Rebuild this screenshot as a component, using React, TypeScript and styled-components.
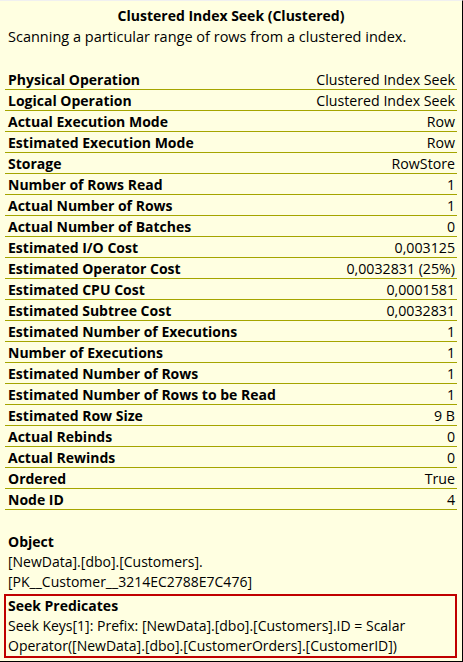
import styled, { createGlobalStyle } from "styled-components";

const GlobalStyle = createGlobalStyle`
  body {
    margin: 0;
    background: #ffffe1;
  }
`;

const Tooltip = styled.div`
  box-sizing: border-box;
  width: 463px;
  height: 662px;
  background: #ffffe1;
  border-top: 1px solid #f0f0f0;
  border-right: 1px solid #000;
  border-bottom: 1px solid #000;
  font-family: "Open Sans", "Noto Sans", sans-serif;
  font-size: 14px;
  color: #000;
  display: flex;
  flex-direction: column;
`;

const Title = styled.div`
  font-weight: 700;
  text-align: center;
  line-height: 21px;
  padding-top: 4px;
`;

const Description = styled.div`
  padding-left: 8px;
  line-height: 21px;
  font-size: 14.5px;
`;

const Table = styled.div`
  display: flex;
  flex-direction: column;
  margin: 22px 5px 0 5px;
`;

const Row = styled.div`
  display: flex;
  justify-content: space-between;
  align-items: center;
  height: 21px;
  box-sizing: border-box;
  border-bottom: 1px solid #a5a500;
  padding: 0 2px 0 3px;
`;

const Label = styled.span`
  font-weight: 700;
`;

const Value = styled.span`
  font-size: 14.2px;
`;

const Section = styled.div<{ $boxed?: boolean; $top?: number }>`
  margin: ${({ $top }) => $top ?? 0}px 5px 0 4px;
  padding: 0 4px 0 ${({ $boxed }) => ($boxed ? "2px" : "4px")};
  line-height: 20px;
  border: ${({ $boxed }) => ($boxed ? "2px solid #c00000" : "none")};
`;

const SectionTitle = styled.div`
  font-weight: 700;
`;

const rows: [string, string][] = [
  ["Physical Operation", "Clustered Index Seek"],
  ["Logical Operation", "Clustered Index Seek"],
  ["Actual Execution Mode", "Row"],
  ["Estimated Execution Mode", "Row"],
  ["Storage", "RowStore"],
  ["Number of Rows Read", "1"],
  ["Actual Number of Rows", "1"],
  ["Actual Number of Batches", "0"],
  ["Estimated I/O Cost", "0,003125"],
  ["Estimated Operator Cost", "0,0032831 (25%)"],
  ["Estimated CPU Cost", "0,0001581"],
  ["Estimated Subtree Cost", "0,0032831"],
  ["Estimated Number of Executions", "1"],
  ["Number of Executions", "1"],
  ["Estimated Number of Rows", "1"],
  ["Estimated Number of Rows to be Read", "1"],
  ["Estimated Row Size", "9 B"],
  ["Actual Rebinds", "0"],
  ["Actual Rewinds", "0"],
  ["Ordered", "True"],
  ["Node ID", "4"],
];

export default function App() {
  return (
    <>
      <GlobalStyle />
      <Tooltip>
        <Title>Clustered Index Seek (Clustered)</Title>
        <Description>
          Scanning a particular range of rows from a clustered index.
        </Description>
        <Table>
          {rows.map(([label, value]) => (
            <Row key={label}>
              <Label>{label}</Label>
              <Value>{value}</Value>
            </Row>
          ))}
        </Table>
        <Section $top={22}>
          <SectionTitle>Object</SectionTitle>
          <div>[NewData].[dbo].[Customers].</div>
          <div>[PK__Customer__3214EC2788E7C476]</div>
        </Section>
        <Section $boxed $top={2}>
          <SectionTitle>Seek Predicates</SectionTitle>
          <div>
            Seek Keys[1]: Prefix: [NewData].[dbo].[Customers].ID = Scalar
            Operator([NewData].[dbo].[CustomerOrders].[CustomerID])
          </div>
        </Section>
      </Tooltip>
    </>
  );
}
